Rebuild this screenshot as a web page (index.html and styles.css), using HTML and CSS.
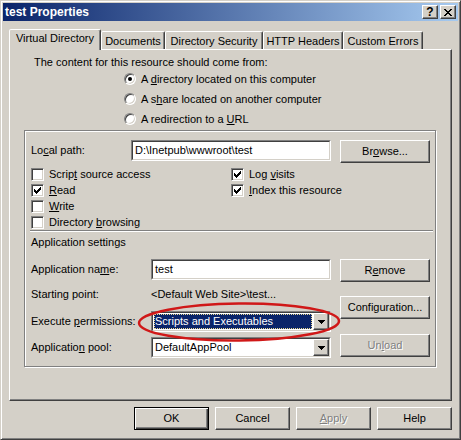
FILE: index.html
```html
<!DOCTYPE html>
<html>
<head>
<meta charset="utf-8">
<title>test Properties</title>
<link rel="stylesheet" href="styles.css">
</head>
<body>
<div class="window">
  <div class="titlebar">
    <span class="title">test Properties</span>
    <div class="tb-buttons">
      <span class="tbtn raised q">?</span>
      <span class="tbtn raised"><svg width="8" height="7" viewBox="0 0 8 7" shape-rendering="crispEdges"><path d="M0 0h2v1H0z M6 0h2v1H6z M1 1h2v1H1z M5 1h2v1H5z M2 2h4v1H2z M3 3h2v1H3z M2 4h4v1H2z M1 5h2v1H1z M5 5h2v1H5z M0 6h2v1H0z M6 6h2v1H6z" fill="#000"/></svg></span>
    </div>
  </div>

  <div class="tabs">
    <div class="tab active t1">Virtual Directory</div>
    <div class="tab t2">Documents</div>
    <div class="tab t3">Directory Security</div>
    <div class="tab t4">HTTP Headers</div>
    <div class="tab t5">Custom Errors</div>
  </div>

  <div class="panel">
    <p class="intro">The content for this resource should come from:</p>
    <div class="radios">
      <div class="radio-row"><span class="radio checked"></span><span>A <u>d</u>irectory located on this computer</span></div>
      <div class="radio-row"><span class="radio"></span><span>A s<u>h</u>are located on another computer</span></div>
      <div class="radio-row"><span class="radio"></span><span>A redirection to a <u>U</u>RL</span></div>
    </div>

    <div class="group">
      <div class="path-row">
        <span class="lbl path-lbl">Lo<u>c</u>al path:</span>
        <div class="field w200"><div class="field-in">D:\Inetpub\wwwroot\test</div></div>
        <div class="btn side-btn">Br<u>o</u>wse...</div>
      </div>

      <div class="checks">
        <div class="check-col left">
          <div class="check-row"><span class="cb"></span><span>Scrip<u>t</u> source access</span></div>
          <div class="check-row"><span class="cb"><svg width="7" height="7" viewBox="0 0 7 7" shape-rendering="crispEdges"><path d="M6 0h1v1h-1z M5 1h2v1h-2z M0 2h1v1H0z M4 2h3v1H4z M0 3h2v1H0z M3 3h3v1H3z M0 4h5v1H0z M1 5h3v1H1z M2 6h1v1H2z" fill="#000"/></svg></span><span><u>R</u>ead</span></div>
          <div class="check-row"><span class="cb"></span><span><u>W</u>rite</span></div>
          <div class="check-row"><span class="cb"></span><span>Directory <u>b</u>rowsing</span></div>
        </div>
        <div class="check-col">
          <div class="check-row"><span class="cb"><svg width="7" height="7" viewBox="0 0 7 7" shape-rendering="crispEdges"><path d="M6 0h1v1h-1z M5 1h2v1h-2z M0 2h1v1H0z M4 2h3v1H4z M0 3h2v1H0z M3 3h3v1H3z M0 4h5v1H0z M1 5h3v1H1z M2 6h1v1H2z" fill="#000"/></svg></span><span>Log <u>v</u>isits</span></div>
          <div class="check-row"><span class="cb"><svg width="7" height="7" viewBox="0 0 7 7" shape-rendering="crispEdges"><path d="M6 0h1v1h-1z M5 1h2v1h-2z M0 2h1v1H0z M4 2h3v1H4z M0 3h2v1H0z M3 3h3v1H3z M0 4h5v1H0z M1 5h3v1H1z M2 6h1v1H2z" fill="#000"/></svg></span><span><u>I</u>ndex this resource</span></div>
        </div>
      </div>

      <div class="sep"></div>
      <div class="section-title">Application settings</div>

      <div class="app">
        <div class="app-fields">
          <div class="app-row r1"><span class="lbl app-lbl tall">Application na<u>m</u>e:</span><div class="field w180"><div class="field-in">test</div></div></div>
          <div class="app-row r2"><span class="lbl app-lbl">Starting point:</span><span class="val">&lt;Default Web Site&gt;\test...</span></div>
          <div class="app-row r3"><span class="lbl app-lbl tall">Execute <u>p</u>ermissions:</span>
            <div class="field combo w180"><div class="field-in combo-in">
              <span class="sel">Scripts and Executables</span>
              <span class="drop raised"><svg width="7" height="4" viewBox="0 0 7 4" shape-rendering="crispEdges"><path d="M0 0h7v1H0z M1 1h5v1H1z M2 2h3v1H2z M3 3h1v1H3z" fill="#000"/></svg></span>
            </div></div>
          </div>
          <div class="app-row r4"><span class="lbl app-lbl tall">Applicatio<u>n</u> pool:</span>
            <div class="field combo w180"><div class="field-in combo-in">
              <span class="plain">DefaultAppPool</span>
              <span class="drop raised"><svg width="7" height="4" viewBox="0 0 7 4" shape-rendering="crispEdges"><path d="M0 0h7v1H0z M1 1h5v1H1z M2 2h3v1H2z M3 3h1v1H3z" fill="#000"/></svg></span>
            </div></div>
          </div>
        </div>
        <div class="app-btns">
          <div class="btn side-btn">R<u>e</u>move</div>
          <div class="btn side-btn cfg">Configuration...</div>
          <div class="btn side-btn unload disabled">Un<u>l</u>oad</div>
        </div>
      </div>
    </div>
  </div>

  <div class="footer">
    <div class="btn foot-btn default">OK</div>
    <div class="btn foot-btn">Cancel</div>
    <div class="btn foot-btn disabled"><u>A</u>pply</div>
    <div class="btn foot-btn">Help</div>
  </div>

  <svg class="ellipse" width="210" height="48" viewBox="0 0 210 48"><ellipse cx="104" cy="23" rx="100" ry="18.5" fill="none" stroke="#d01818" stroke-width="2.5" transform="rotate(-0.6 104 23)"/></svg>
</div>
</body>
</html>
```

FILE: styles.css
```css
* { box-sizing: border-box; }
html, body { margin: 0; padding: 0; }
body {
  font-family: "Liberation Sans", Arial, sans-serif;
  font-size: 11px;
  line-height: 13px;
  color: #000;
  background: #d4d0c8;
}
u { text-decoration: underline; text-underline-offset: 1px; }

.window {
  position: relative;
  width: 461px;
  height: 440px;
  background: #d4d0c8;
  border: 1px solid;
  border-color: #d4d0c8 #404040 #404040 #d4d0c8;
  box-shadow: inset 1px 1px #fff, inset -1px -1px #808080;
  padding: 2px;
}

.raised {
  background: #d4d0c8;
  border: 1px solid;
  border-color: #fff #404040 #404040 #fff;
  box-shadow: inset -1px -1px #808080;
}

/* title bar */
.titlebar {
  height: 18px;
  display: flex;
  align-items: center;
  background: linear-gradient(to right, #0a246a, #a6caf0);
}
.title {
  color: #fff;
  font-weight: bold;
  font-size: 12px;
  padding-left: 2px;
}
.tb-buttons {
  margin-left: auto;
  margin-right: 2px;
  display: flex;
  gap: 2px;
}
.tbtn {
  width: 16px;
  height: 14px;
  display: flex;
  align-items: center;
  justify-content: center;
}
.tbtn.q {
  font-weight: bold;
  font-size: 12px;
  line-height: 12px;
}

/* tabs */
.tabs {
  display: flex;
  align-items: flex-end;
  height: 20px;
  margin: 8px 0 0 6px;
  position: relative;
  z-index: 1;
}
.tab {
  height: 18px;
  border: 1px solid;
  border-bottom: 0;
  border-color: #fff #404040 transparent #fff;
  box-shadow: inset -1px 0 #808080;
  border-radius: 2px 2px 0 0;
  padding-top: 3px;
  text-align: center;
  background: #d4d0c8;
  white-space: nowrap;
}
.tab.active {
  height: 21px;
  margin-bottom: -1px;
  padding-top: 2px;
}
.t1 { width: 92px; }
.t2 { width: 64px; }
.t3 { width: 98px; }
.t4 { width: 80px; }
.t5 { width: 80px; }

/* panel */
.panel {
  position: relative;
  margin-left: 6px;
  width: 443px;
  height: 352px;
  border: 1px solid;
  border-color: #fff #404040 #404040 #fff;
  box-shadow: inset -1px -1px #808080;
}
.intro {
  margin: 6px 0 0 24px;
}
.radios {
  margin-left: 114px;
}
.radio-row {
  height: 20px;
  display: flex;
  align-items: center;
  white-space: nowrap;
}
.radio {
  position: relative;
  width: 12px;
  height: 12px;
  border-radius: 50%;
  border: 1px solid;
  border-color: #808080 #fff #fff #808080;
  background: #fff;
  box-shadow: inset 1px 1px #404040, inset -1px -1px #d4d0c8;
  margin-right: 5px;
  flex: none;
}
.radio.checked::after {
  content: "";
  position: absolute;
  left: 3px;
  top: 3px;
  width: 4px;
  height: 4px;
  border-radius: 50%;
  background: #000;
}

/* group box */
.group {
  margin: 1px 0 0 14px;
  width: 412px;
  height: 237px;
  border: 1px solid #808080;
  box-shadow: inset 1px 1px #fff, 1px 1px #fff;
}
.path-row {
  display: flex;
  margin-top: 9px;
  padding-left: 6px;
  height: 23px;
}
.lbl { white-space: nowrap; }
.path-lbl { width: 100px; line-height: 21px; }

.field {
  height: 21px;
  border: 1px solid;
  border-color: #808080 #fff #fff #808080;
  flex: none;
}
.field-in {
  height: 100%;
  border: 1px solid;
  border-color: #404040 #d4d0c8 #d4d0c8 #404040;
  background: #fff;
  padding-left: 2px;
  line-height: 17px;
  white-space: nowrap;
  overflow: hidden;
}
.w200 { width: 200px; }
.w180 { width: 180px; }

.btn {
  height: 23px;
  border: 1px solid;
  border-color: #fff #404040 #404040 #fff;
  box-shadow: inset -1px -1px #808080;
  background: #d4d0c8;
  text-align: center;
  line-height: 21px;
  white-space: nowrap;
  flex: none;
}
.btn.default {
  border-color: #000;
  box-shadow: inset 1px 1px #fff, inset -1px -1px #404040, inset -2px -2px #808080;
}
.btn.disabled {
  color: #808080;
  text-shadow: 1px 1px #fff;
}
.side-btn {
  width: 90px;
  margin-left: 9px;
}

.checks {
  display: flex;
  margin-top: 3px;
  padding-left: 6px;
  height: 64px;
}
.check-col.left { width: 200px; }
.check-row {
  height: 16px;
  display: flex;
  align-items: center;
  white-space: nowrap;
  line-height: 13px;
}
.cb {
  width: 13px;
  height: 13px;
  border: 1px solid;
  border-color: #808080 #fff #fff #808080;
  background: #fff;
  box-shadow: inset 1px 1px #404040, inset -1px -1px #d4d0c8;
  margin-right: 5px;
  flex: none;
  display: flex;
  align-items: center;
  justify-content: center;
}

.sep {
  margin-left: 5px;
  width: 403px;
  height: 2px;
  border-top: 1px solid #808080;
  border-bottom: 1px solid #fff;
}
.section-title {
  margin: 4px 0 0 6px;
}

.app {
  display: flex;
  margin-top: 10px;
  padding-left: 6px;
}
.app-fields { width: 300px; }
.app-row { display: flex; }
.app-lbl { width: 120px; }
.app-lbl.tall { line-height: 21px; }
.r2 { margin-top: 8px; }
.r3 { margin-top: 10px; }
.r4 { margin-top: 5px; }
.val { white-space: nowrap; }

.combo-in {
  display: flex;
  padding-left: 0;
}
.sel {
  flex: 1;
  margin: 1px;
  background: #0a246a;
  color: #fff;
  outline: 1px dotted #e8d890;
  outline-offset: -1px;
  padding-left: 1px;
  line-height: 15px;
}
.plain {
  flex: 1;
  padding-left: 2px;
  line-height: 17px;
}
.drop {
  width: 16px;
  height: 17px;
  display: flex;
  align-items: center;
  justify-content: center;
  flex: none;
}

.app-btns { display: flex; flex-direction: column; }
.cfg { margin-top: 14px; }
.unload { margin-top: 15px; }

/* footer */
.footer {
  display: flex;
  justify-content: flex-end;
  gap: 6px;
  margin-top: 6px;
  padding-right: 6px;
}
.foot-btn { width: 75px; }

.ellipse {
  position: absolute;
  left: 134px;
  top: 298px;
  pointer-events: none;
}
```
